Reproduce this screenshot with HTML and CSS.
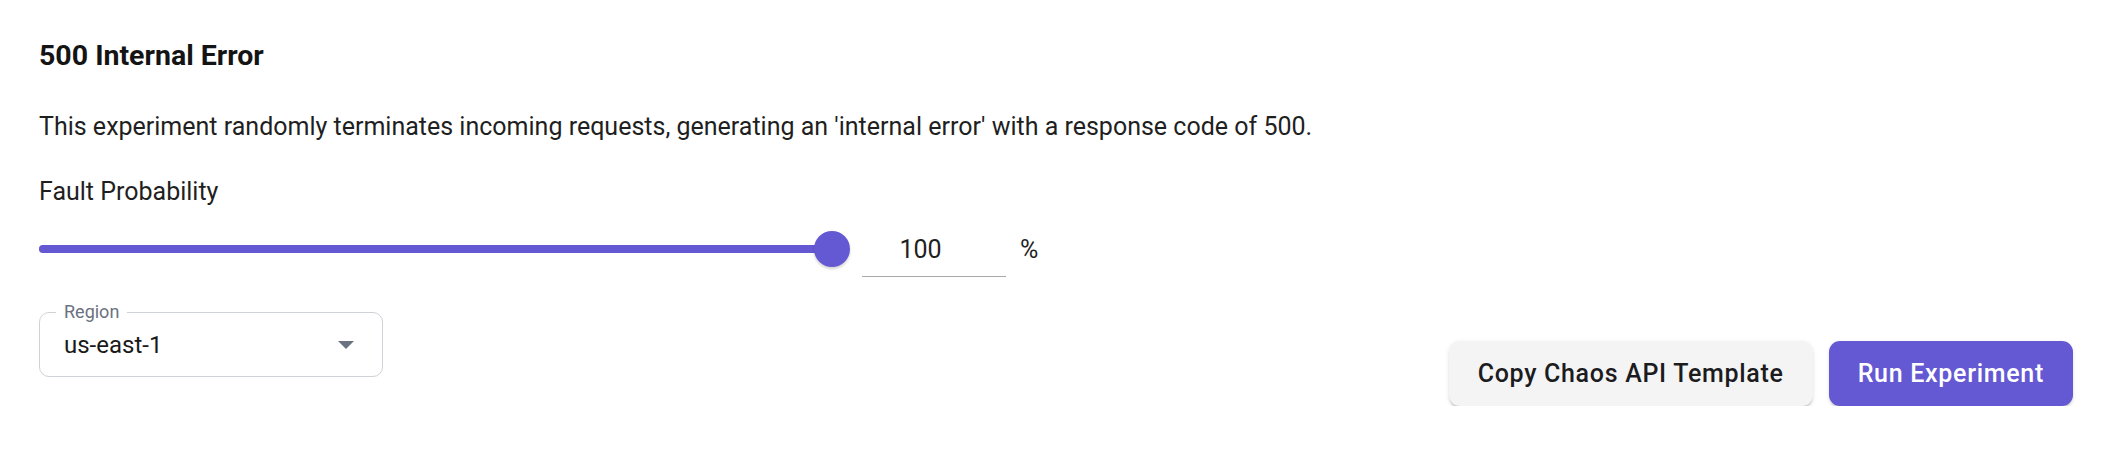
FILE: index.html
```html
<!DOCTYPE html>
<html lang="en">
<head>
<meta charset="utf-8">
<title>500 Internal Error</title>
<link rel="stylesheet" href="styles.css">
</head>
<body>
<main class="panel">
  <h2 class="title">500 Internal Error</h2>
  <p class="desc">This experiment randomly terminates incoming requests, generating an 'internal error' with a response code of 500.</p>
  <div class="field-label">Fault Probability</div>
  <div class="slider-row">
    <div class="slider">
      <div class="rail"><div class="track" style="width:100%"></div></div>
      <span class="thumb"></span>
    </div>
    <div class="num-input"><span class="num-value">100</span></div>
    <span class="unit">%</span>
  </div>
  <div class="bottom-row">
    <div class="select">
      <span class="select-label">Region</span>
      <span class="select-value">us-east-1</span>
      <svg class="caret" width="16" height="8" viewBox="0 0 16 8"><path d="M0 0 L16 0 L8 8 Z" fill="#6b7280"/></svg>
    </div>
    <div class="actions">
      <button class="btn btn-light">Copy Chaos API Template</button>
      <button class="btn btn-primary">Run Experiment</button>
    </div>
  </div>
</main>
</body>
</html>
```

FILE: styles.css
```css
* { box-sizing: border-box; }
html, body { margin: 0; padding: 0; background: #ffffff; }
body { font-family: Roboto, "Liberation Sans", Arial, sans-serif; color: #1c1c1e; }

.panel { padding: 0 38px 0 39px; }

.title {
  margin: 40px 0 0;
  font-size: 28.5px;
  line-height: 32px;
  font-weight: 700;
  color: #141414;
}

.desc {
  margin: 40px 0 0;
  font-size: 25px;
  line-height: 30px;
  color: #1f1f1f;
}

.field-label {
  margin-top: 35px;
  font-size: 25px;
  line-height: 30px;
  color: #1f1f1f;
}

.slider-row {
  margin-top: 22px;
  height: 40px;
  display: flex;
  align-items: center;
}

.slider {
  position: relative;
  width: 793px;
  height: 40px;
  display: flex;
  align-items: center;
}
.rail {
  width: 100%;
  height: 8px;
  border-radius: 4px;
  background: #c9c5f0;
}
.track {
  height: 100%;
  border-radius: 4px;
  background: #6558d3;
}
.thumb {
  position: absolute;
  right: -18px;
  top: 2px;
  width: 36px;
  height: 36px;
  border-radius: 50%;
  background: #6558d3;
  box-shadow: 0 2px 3px rgba(0,0,0,0.18);
}

.num-input {
  margin-left: 30px;
  width: 144px;
  height: 40px;
  border-bottom: 1px solid #a8a8a8;
  display: flex;
  align-items: center;
  justify-content: center;
  margin-top: 16px;
  padding: 0 27px 14px 0;
}
.num-value { font-size: 25px; color: #1f1f1f; }

.unit {
  margin-left: 14px;
  font-size: 25px;
  color: #1f1f1f;
}

.bottom-row {
  margin-top: 43px;
  display: flex;
  justify-content: space-between;
  align-items: flex-start;
}

.select {
  position: relative;
  width: 344px;
  height: 65px;
  border: 1px solid #cfd2d6;
  border-radius: 10px;
  display: flex;
  align-items: center;
  padding: 0 28px 0 24px;
  justify-content: space-between;
}
.select-label {
  position: absolute;
  left: 16px;
  top: -12px;
  padding: 0 8px;
  background: #ffffff;
  font-size: 18px;
  line-height: 22px;
  color: #6b7280;
}
.select-value { font-size: 24px; color: #1a1a1a; }
.caret { display: block; }

.actions {
  margin-top: 29px;
  display: flex;
  gap: 16px;
}

.btn {
  height: 65px;
  border: none;
  border-radius: 11px;
  padding: 0 29px;
  font-family: Roboto, "Liberation Sans", Arial, sans-serif;
  font-size: 25px;
  font-weight: 500;
  letter-spacing: 0.7px;
  cursor: pointer;
}
.btn-light {
  background: #f4f4f5;
  color: #1c1c1e;
  box-shadow: 0 3px 3px -1px rgba(0,0,0,0.22), 0 1px 5px rgba(0,0,0,0.08);
}
.btn-primary {
  background: #6558d3;
  color: #ffffff;
  box-shadow: 0 3px 3px -1px rgba(0,0,0,0.18), 0 1px 5px rgba(0,0,0,0.08);
}
```
